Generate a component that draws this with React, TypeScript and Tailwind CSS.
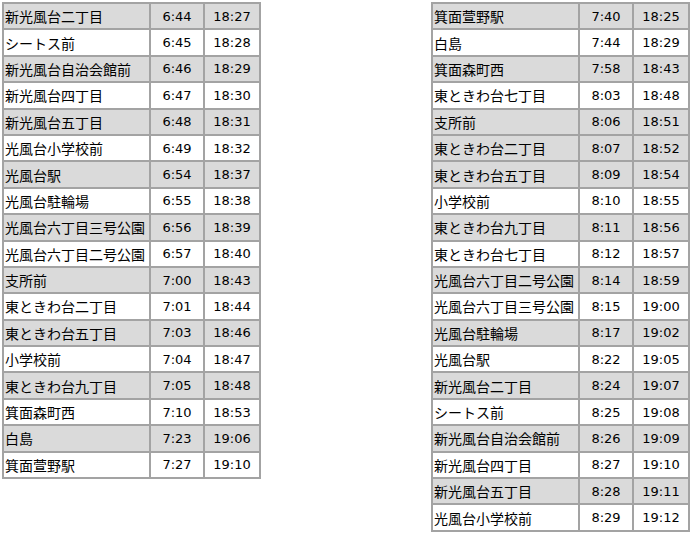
type Row = [string, string, string, boolean];

const left: Row[] = [
  ['新光風台二丁目', '6:44', '18:27', true],
  ['シートス前', '6:45', '18:28', false],
  ['新光風台自治会館前', '6:46', '18:29', true],
  ['新光風台四丁目', '6:47', '18:30', false],
  ['新光風台五丁目', '6:48', '18:31', true],
  ['光風台小学校前', '6:49', '18:32', false],
  ['光風台駅', '6:54', '18:37', true],
  ['光風台駐輪場', '6:55', '18:38', false],
  ['光風台六丁目三号公園', '6:56', '18:39', true],
  ['光風台六丁目二号公園', '6:57', '18:40', false],
  ['支所前', '7:00', '18:43', true],
  ['東ときわ台二丁目', '7:01', '18:44', false],
  ['東ときわ台五丁目', '7:03', '18:46', true],
  ['小学校前', '7:04', '18:47', false],
  ['東ときわ台九丁目', '7:05', '18:48', true],
  ['箕面森町西', '7:10', '18:53', false],
  ['白島', '7:23', '19:06', true],
  ['箕面萱野駅', '7:27', '19:10', false],
];

const right: Row[] = [
  ['箕面萱野駅', '7:40', '18:25', true],
  ['白島', '7:44', '18:29', false],
  ['箕面森町西', '7:58', '18:43', true],
  ['東ときわ台七丁目', '8:03', '18:48', false],
  ['支所前', '8:06', '18:51', true],
  ['東ときわ台二丁目', '8:07', '18:52', true],
  ['東ときわ台五丁目', '8:09', '18:54', true],
  ['小学校前', '8:10', '18:55', false],
  ['東ときわ台九丁目', '8:11', '18:56', true],
  ['東ときわ台七丁目', '8:12', '18:57', false],
  ['光風台六丁目二号公園', '8:14', '18:59', true],
  ['光風台六丁目三号公園', '8:15', '19:00', false],
  ['光風台駐輪場', '8:17', '19:02', true],
  ['光風台駅', '8:22', '19:05', false],
  ['新光風台二丁目', '8:24', '19:07', true],
  ['シートス前', '8:25', '19:08', false],
  ['新光風台自治会館前', '8:26', '19:09', true],
  ['新光風台四丁目', '8:27', '19:10', false],
  ['新光風台五丁目', '8:28', '19:11', true],
  ['光風台小学校前', '8:29', '19:12', false],
];

function Timetable({ rows, nameW }: { rows: Row[]; nameW: string }) {
  return (
    <table className="border-separate border-spacing-0 border border-[#a3a3a3] text-black">
      <tbody>
        {rows.map(([name, a, b, shaded], i) => (
          <tr key={i} className={shaded ? 'bg-[#dadada]' : 'bg-white'}>
            <td
              className={`${nameW} h-[26.4px] border border-[#a3a3a3] pl-[1px] py-0 text-[14px] leading-none whitespace-nowrap font-['Noto_Sans_CJK_JP',sans-serif]`}
            >
              {name}
            </td>
            <td className="w-[54px] h-[26.4px] border border-[#a3a3a3] py-0 text-center text-[13px] leading-none font-['DejaVu_Sans',sans-serif]">
              {a}
            </td>
            <td className="w-[56px] h-[26.4px] border border-[#a3a3a3] py-0 text-center text-[13px] leading-none font-['DejaVu_Sans',sans-serif]">
              {b}
            </td>
          </tr>
        ))}
      </tbody>
    </table>
  );
}

export default function App() {
  return (
    <div className="flex items-start justify-between pl-[2px] pr-[1px] pt-[2px] bg-white min-h-[534px]">
      <Timetable rows={left} nameW="w-[147px]" />
      <Timetable rows={right} nameW="w-[147px]" />
    </div>
  );
}
